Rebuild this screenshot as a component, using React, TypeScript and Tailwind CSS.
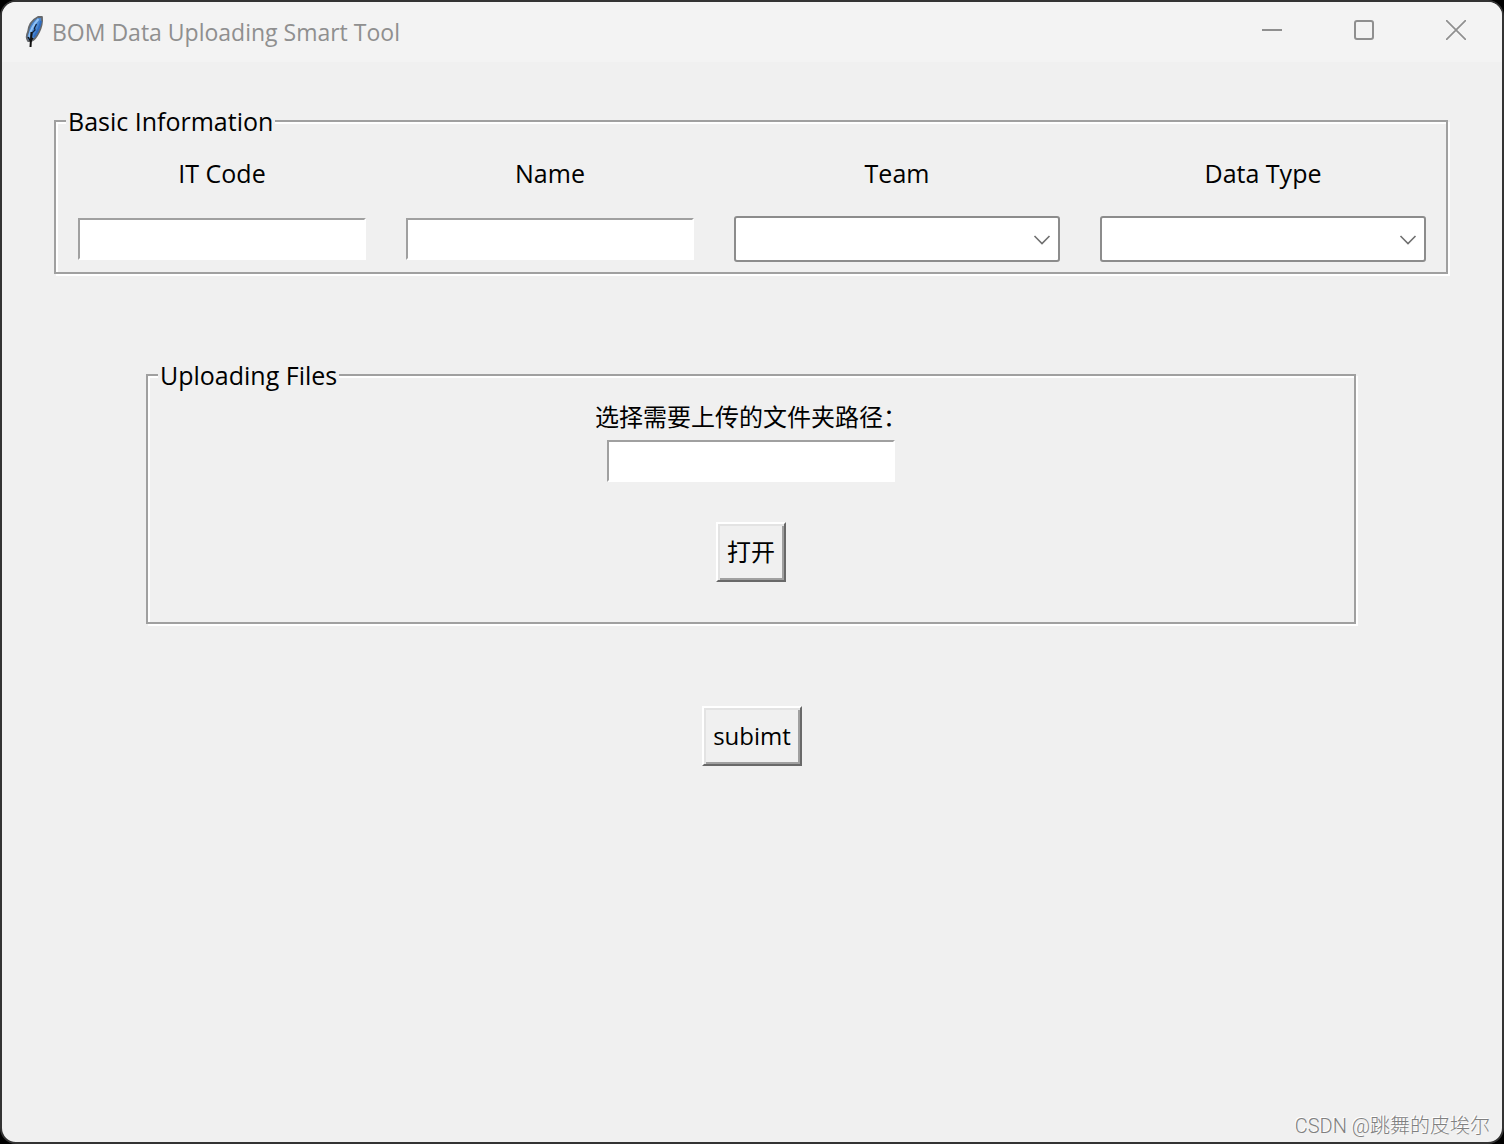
import type { ReactNode } from "react";

const entryStyle =
  "h-[42px] w-full border-2 border-t-[#a0a0a0] border-l-[#a0a0a0] border-r-white border-b-white bg-white px-1 text-2xl outline-none";

const Feather = () => (
  <svg width="20" height="34" viewBox="0 0 20 34" aria-hidden="true">
    <path
      d="M18 2 C18.500 7 17.500 12 15 17 C13 21 10.500 25 7.500 26 L4 26 C2 23 2.500 20 4 17 C4.500 11 8 5 14 2 Z"
      fill="#4a86cf"
      stroke="#65686c"
      strokeWidth="1.800"
      strokeLinejoin="round"
    />
    <path d="M14.500 4 C10 9 6.500 14 5 22" fill="none" stroke="#8fc1f5" strokeWidth="2" />
    <path d="M17 6 C16 11 14 16 10 22" fill="none" stroke="#2f6cc0" strokeWidth="2" />
    <path d="M12.500 9 L10.500 13 L11 15 L8 18 L7.500 21" fill="none" stroke="#14233c" strokeWidth="1.200" />
    <path d="M7.500 17 L6.500 32" fill="none" stroke="#111" strokeWidth="2" />
    <path d="M4 22 L6.500 26 L9 23" fill="none" stroke="#111" strokeWidth="1.400" />
  </svg>
);

const TitleBar = () => {
  const control = "flex h-[56px] w-[92px] items-center justify-center text-[#8f8f8f]";
  return (
    <header className="flex h-[60px] items-start bg-[#f3f3f3]">
      <div className="flex h-[60px] flex-1 items-center gap-2 pl-[22px]">
        <Feather />
        <h1 className="text-[23px] text-[#8f8f8f]">BOM Data Uploading Smart Tool</h1>
      </div>
      <button type="button" aria-label="Minimize" className={control}>
        <svg width="20" height="20" viewBox="0 0 20 20">
          <path d="M0 10 H20" stroke="currentColor" strokeWidth="2" />
        </svg>
      </button>
      <button type="button" aria-label="Maximize" className={control}>
        <svg width="20" height="20" viewBox="0 0 20 20">
          <rect x="1" y="1" width="18" height="18" rx="2" fill="none" stroke="currentColor" strokeWidth="2" />
        </svg>
      </button>
      <button type="button" aria-label="Close" className={control}>
        <svg width="20" height="20" viewBox="0 0 20 20">
          <path d="M0 0 L20 20 M20 0 L0 20" stroke="currentColor" strokeWidth="1.700" />
        </svg>
      </button>
    </header>
  );
};

const LabelFrame = ({ title, className, children }: { title: string; className: string; children: ReactNode }) => (
  <fieldset className={`border-2 border-[#a0a0a0] shadow-[2px_2px_0_#fff,inset_2px_2px_0_#fff] ${className}`}>
    <legend className="ml-[10px] bg-[#f0f0f0] px-[2px] text-[25px] leading-8">{title}</legend>
    {children}
  </fieldset>
);

const Field = ({ id, label, children }: { id: string; label: string; children: ReactNode }) => (
  <div className="flex flex-col gap-[27px]">
    <label htmlFor={id} className="text-center text-[25px] leading-8">
      {label}
    </label>
    <div className="flex h-[46px] items-center">{children}</div>
  </div>
);

const ComboBox = ({ id }: { id: string }) => (
  <div className="relative h-full w-full">
    <select
      id={id}
      className="h-full w-full appearance-none rounded-[3px] border-2 border-[#8c8c8c] bg-white pr-10 pl-2 outline-none"
    >
      <option value=""></option>
    </select>
    <svg
      className="pointer-events-none absolute top-[18px] right-[9px]"
      width="18"
      height="12"
      viewBox="0 0 18 12"
      aria-hidden="true"
    >
      <path d="M1.500 2 L9 9.500 L16.500 2" fill="none" stroke="#707070" strokeWidth="1.600" />
    </svg>
  </div>
);

const PushButton = ({ children }: { children: ReactNode }) => (
  <button
    type="button"
    className="h-[60px] border-2 border-t-white border-r-[#696969] border-b-[#696969] border-l-white bg-[#f0f0f0] px-[9px] shadow-[inset_2px_2px_0_#e3e3e3,inset_-2px_-2px_0_#a0a0a0]"
  >
    {children}
  </button>
);

const App = () => {
  return (
    <div className="flex min-h-screen bg-black font-['Open_Sans','Noto_Sans_CJK_SC',sans-serif] text-2xl text-black">
      <div className="flex flex-1 flex-col overflow-hidden rounded-2xl border-2 border-[#333] bg-[#f0f0f0]">
        <TitleBar />

        <main className="flex flex-col">
          {/* Basic information */}
          <LabelFrame title="Basic Information" className="mt-[43px] mr-[54px] ml-[52px] pb-[10px]">
            <div className="grid grid-cols-[288fr_288fr_326fr_326fr] gap-10 pt-5 pr-5 pl-[22px]">
              <Field id="it-code" label="IT Code">
                <input id="it-code" type="text" className={entryStyle} />
              </Field>
              <Field id="name" label="Name">
                <input id="name" type="text" className={entryStyle} />
              </Field>
              <Field id="team" label="Team">
                <ComboBox id="team" />
              </Field>
              <Field id="data-type" label="Data Type">
                <ComboBox id="data-type" />
              </Field>
            </div>
          </LabelFrame>

          {/* Uploading files */}
          <LabelFrame title="Uploading Files" className="mt-[85px] mr-[146px] ml-[144px] pb-10">
            <div className="flex flex-col items-center pt-[10px]">
              <label htmlFor="folder" className="leading-8">
                选择需要上传的文件夹路径：
              </label>
              <div className="mt-[7px] mb-10 w-[288px]">
                <input id="folder" type="text" className={`${entryStyle} block`} />
              </div>
              <PushButton>打开</PushButton>
            </div>
          </LabelFrame>

          <div className="mt-[82px] flex justify-center">
            <PushButton>subimt</PushButton>
          </div>
        </main>

        <footer className="mt-auto pr-3 pb-1 text-right font-[Roboto,'Noto_Sans_CJK_SC',sans-serif] text-xl leading-6 font-light text-[#808080] [text-shadow:-1px_-1px_0_#fff]">
          CSDN @跳舞的皮埃尔
        </footer>
      </div>
    </div>
  );
};

export default App;
